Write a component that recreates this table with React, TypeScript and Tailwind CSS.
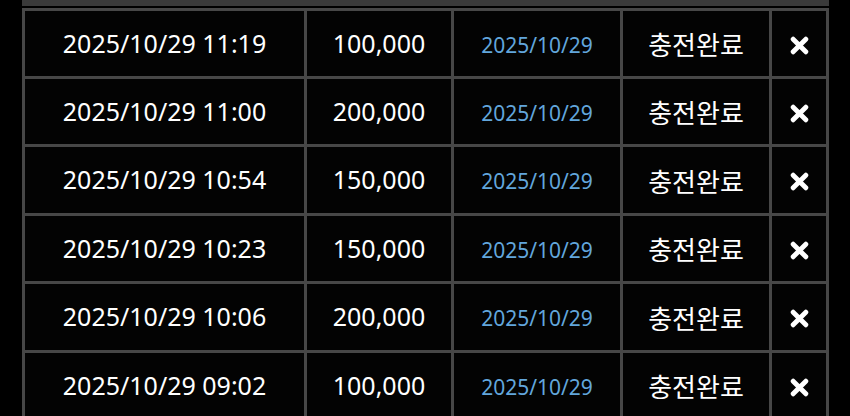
const rows = [
  { at: "2025/10/29 11:19", amount: "100,000", date: "2025/10/29", status: "충전완료" },
  { at: "2025/10/29 11:00", amount: "200,000", date: "2025/10/29", status: "충전완료" },
  { at: "2025/10/29 10:54", amount: "150,000", date: "2025/10/29", status: "충전완료" },
  { at: "2025/10/29 10:23", amount: "150,000", date: "2025/10/29", status: "충전완료" },
  { at: "2025/10/29 10:06", amount: "200,000", date: "2025/10/29", status: "충전완료" },
  { at: "2025/10/29 09:02", amount: "100,000", date: "2025/10/29", status: "충전완료" },
];

function CloseIcon() {
  return (
    <svg width="19" height="19" viewBox="0 0 18 18">
      <path
        d="M3 3 L15 15 M15 3 L3 15"
        stroke="#fff"
        strokeWidth="4.6"
        strokeLinecap="round"
      />
    </svg>
  );
}

function App() {
  return (
    <main
      className="h-[416px] w-[850px] overflow-hidden bg-black pl-[22px] text-white"
      style={{ fontFamily: '"Noto Sans", "Noto Sans CJK KR", sans-serif' }}
    >
      <div className="h-[6px] w-[807px] bg-[#3a3a3a]" />
      <div className="mt-[2px] grid w-[807px] grid-cols-[279px_144px_166px_146px_54px] grid-rows-[65px_65px_66px_65px_66px_65px] gap-[3px] bg-[#474747] p-[3px]">
        {rows.map((r, i) => (
          <div key={i} className="contents">
            <div className="flex items-center justify-center bg-[#030303] text-[25px]">
              {r.at}
            </div>
            <div className="flex items-center justify-center bg-[#030303] text-[25px]">
              {r.amount}
            </div>
            <div className="flex items-center justify-center bg-[#030303] pt-[4px] text-[21px] text-[#62a6dc]">
              {r.date}
            </div>
            <div
              className="flex items-center justify-center bg-[#030303] text-[26px]"
              style={{ fontFamily: '"Noto Sans CJK KR", sans-serif' }}
            >
              {r.status}
            </div>
            <div className="flex items-center justify-center bg-[#030303] pt-[3px]">
              <CloseIcon />
            </div>
          </div>
        ))}
      </div>
    </main>
  );
}

export default App;
